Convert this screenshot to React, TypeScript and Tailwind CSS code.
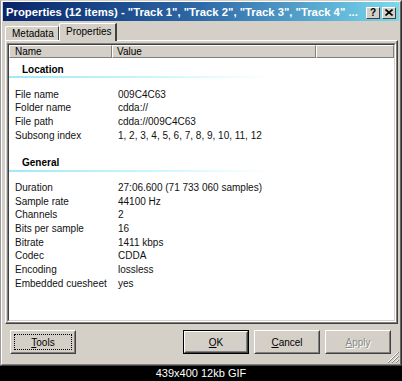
import React from "react";

const font = { fontFamily: '"Liberation Sans", Arial, sans-serif' };

function Btn({
  children,
  w = "w-[66px]",
  def = false,
  focus = false,
  disabled = false,
}: {
  children: React.ReactNode;
  w?: string;
  def?: boolean;
  focus?: boolean;
  disabled?: boolean;
}) {
  const inner = (
    <div className="h-full w-full border border-t-white border-l-white border-r-[#404040] border-b-[#404040]">
      <div className="h-full w-full border border-t-[#d4d0c8] border-l-[#d4d0c8] border-r-[#808080] border-b-[#808080] p-[2px]">
        <div
          className={
            "h-full w-full flex items-center justify-center text-[10px] " +
            (focus ? "border border-dotted border-black" : "border border-transparent") +
            (disabled ? " text-[#8a8a8a] [text-shadow:1px_1px_0_#ffffff]" : " text-black")
          }
        >
          {children}
        </div>
      </div>
    </div>
  );
  return (
    <div className={w + " h-[24px] " + (def ? "border border-black" : "")}>{inner}</div>
  );
}

function TitleBtn({ children }: { children: React.ReactNode }) {
  return (
    <div className="w-[14px] h-[12px] bg-[#d4d0c8] border border-t-white border-l-white border-r-[#404040] border-b-[#404040] flex items-center justify-center">
      {children}
    </div>
  );
}

function Row({ name, value }: { name: string; value: string }) {
  return (
    <div className="h-[13.7px] flex items-center text-[10px] text-[#111] leading-none">
      <div className="w-[103px] pl-[6px] whitespace-nowrap">{name}</div>
      <div className="pl-[6px] whitespace-nowrap">{value}</div>
    </div>
  );
}

function Heading({ label }: { label: string }) {
  return (
    <div className="h-[25px] flex flex-col">
      <div className="h-[13.7px] flex items-center pl-[13px] text-[10px] font-bold text-black leading-none">
        {label}
      </div>
      <div className="h-[2px] w-[262px] bg-gradient-to-r from-[#9fe9f5] via-[#c6f5fb] to-white" />
    </div>
  );
}

export default function App() {
  return (
    <div className="w-[402px] h-[381px] bg-black flex flex-col" style={font}>
      <div className="relative w-[402px] h-[366px] bg-[#d4d0c8] border border-t-[#d4d0c8] border-l-[#9a9a9a] border-r-[#303030] border-b-[#404040]">
        <div className="h-full w-full border border-t-white border-l-white border-r-[#606060] border-b-[#808080] px-[1px] flex flex-col">
          {/* Title bar */}
          <div className="h-[19px] flex items-center pt-[2px] pl-[3px] pr-[3px] bg-gradient-to-r from-[#0a246a] via-[#2f6aa8] to-[#7ad9ec]">
            <div className="flex-1 text-white font-bold text-[11.3px] whitespace-nowrap overflow-hidden leading-none">
              Properties (12 items) - "Track 1", "Track 2", "Track 3", "Track 4" ...
            </div>
            <div className="flex items-center gap-[2px] ml-[4px]">
              <TitleBtn>
                <span className="text-[10px] font-bold text-black leading-none">?</span>
              </TitleBtn>
              <TitleBtn>
                <svg width="8" height="7" viewBox="0 0 8 7">
                  <path d="M0.5 0.5 L7.5 6.5 M7.5 0.5 L0.5 6.5" stroke="#000" strokeWidth="1.6" />
                </svg>
              </TitleBtn>
            </div>
          </div>

          {/* Tabs */}
          <div className="h-[19px] flex items-end pl-[2px] relative z-10">
            <div className="w-[54px] h-[14px] border-t border-l border-t-white border-l-white border-r border-r-[#404040] flex items-center pl-[6px] text-[10px] text-black leading-none rounded-tl-[2px]">
              Metadata
            </div>
            <div className="w-[58px] h-[18px] -mb-[1px] bg-[#d4d0c8] border-t border-l border-t-white border-l-white border-r-2 border-r-[#404040] flex items-start pt-[3px] pl-[6px] text-[10px] text-black leading-none rounded-tl-[2px]">
              Properties
            </div>
          </div>

          {/* Tab panel */}
          <div className="ml-[2px] mr-[1px] border border-t-white border-l-white border-r-[#404040] border-b-[#404040]">
            <div className="border-r border-b border-r-[#808080] border-b-[#808080] pt-[2px] pl-[1px] pr-[0px]">
              <div className="h-[279px] border border-t-[#808080] border-l-[#808080] border-r-white border-b-white">
                <div className="h-full border border-t-[#404040] border-l-[#404040] border-r-[#d4d0c8] border-b-[#d4d0c8] bg-white flex flex-col overflow-hidden">
                  {/* header */}
                  <div className="h-[13px] flex bg-[#d4d0c8] text-[10px] text-black leading-none">
                    <div className="w-[103px] border border-t-white border-l-white border-r-[#808080] border-b-[#808080] pl-[5px] flex items-center">
                      Name
                    </div>
                    <div className="w-[204px] border border-t-white border-l-white border-r-[#808080] border-b-[#808080] pl-[4px] flex items-center">
                      Value
                    </div>
                    <div className="flex-1 border border-t-white border-l-white border-r-[#808080] border-b-[#808080]" />
                  </div>
                  <div className="pt-[4.7px] flex flex-col">
                    <Heading label="Location" />
                    <Row name="File name" value="009C4C63" />
                    <Row name="Folder name" value="cdda://" />
                    <Row name="File path" value="cdda://009C4C63" />
                    <Row name="Subsong index" value="1, 2, 3, 4, 5, 6, 7, 8, 9, 10, 11, 12" />
                    <div className="h-[13.7px]" />
                    <Heading label="General" />
                    <Row name="Duration" value="27:06.600 (71 733 060 samples)" />
                    <Row name="Sample rate" value="44100 Hz" />
                    <Row name="Channels" value="2" />
                    <Row name="Bits per sample" value="16" />
                    <Row name="Bitrate" value="1411 kbps" />
                    <Row name="Codec" value="CDDA" />
                    <Row name="Encoding" value="lossless" />
                    <Row name="Embedded cuesheet" value="yes" />
                  </div>
                </div>
              </div>
            </div>
          </div>

          {/* Buttons */}
          <div className="mt-[6px] flex justify-between pl-[7px] pr-[8px]">
            <Btn focus>
              <span>
                <span className="underline">T</span>ools
              </span>
            </Btn>
            <div className="flex gap-[5px]">
              <Btn def>
                <span>
                  <span className="underline">O</span>K
                </span>
              </Btn>
              <Btn>
                <span>
                  <span className="underline">C</span>ancel
                </span>
              </Btn>
              <Btn disabled>
                <span>
                  <span className="underline">A</span>pply
                </span>
              </Btn>
            </div>
          </div>
        </div>

        {/* resize grip */}
        <svg className="absolute right-[2px] bottom-[2px]" width="12" height="12" viewBox="0 0 12 12">
          <path d="M11 1 L1 11 M11 5 L5 11 M11 9 L9 11" stroke="#ffffff" strokeWidth="1" />
          <path d="M12 1 L1 12 M12 5 L5 12 M12 9 L9 12" stroke="#808080" strokeWidth="1" />
        </svg>
      </div>
      <div className="flex-1 flex items-center justify-center text-white text-[11px] leading-none">
        439x400 12kb GIF
      </div>
    </div>
  );
}
